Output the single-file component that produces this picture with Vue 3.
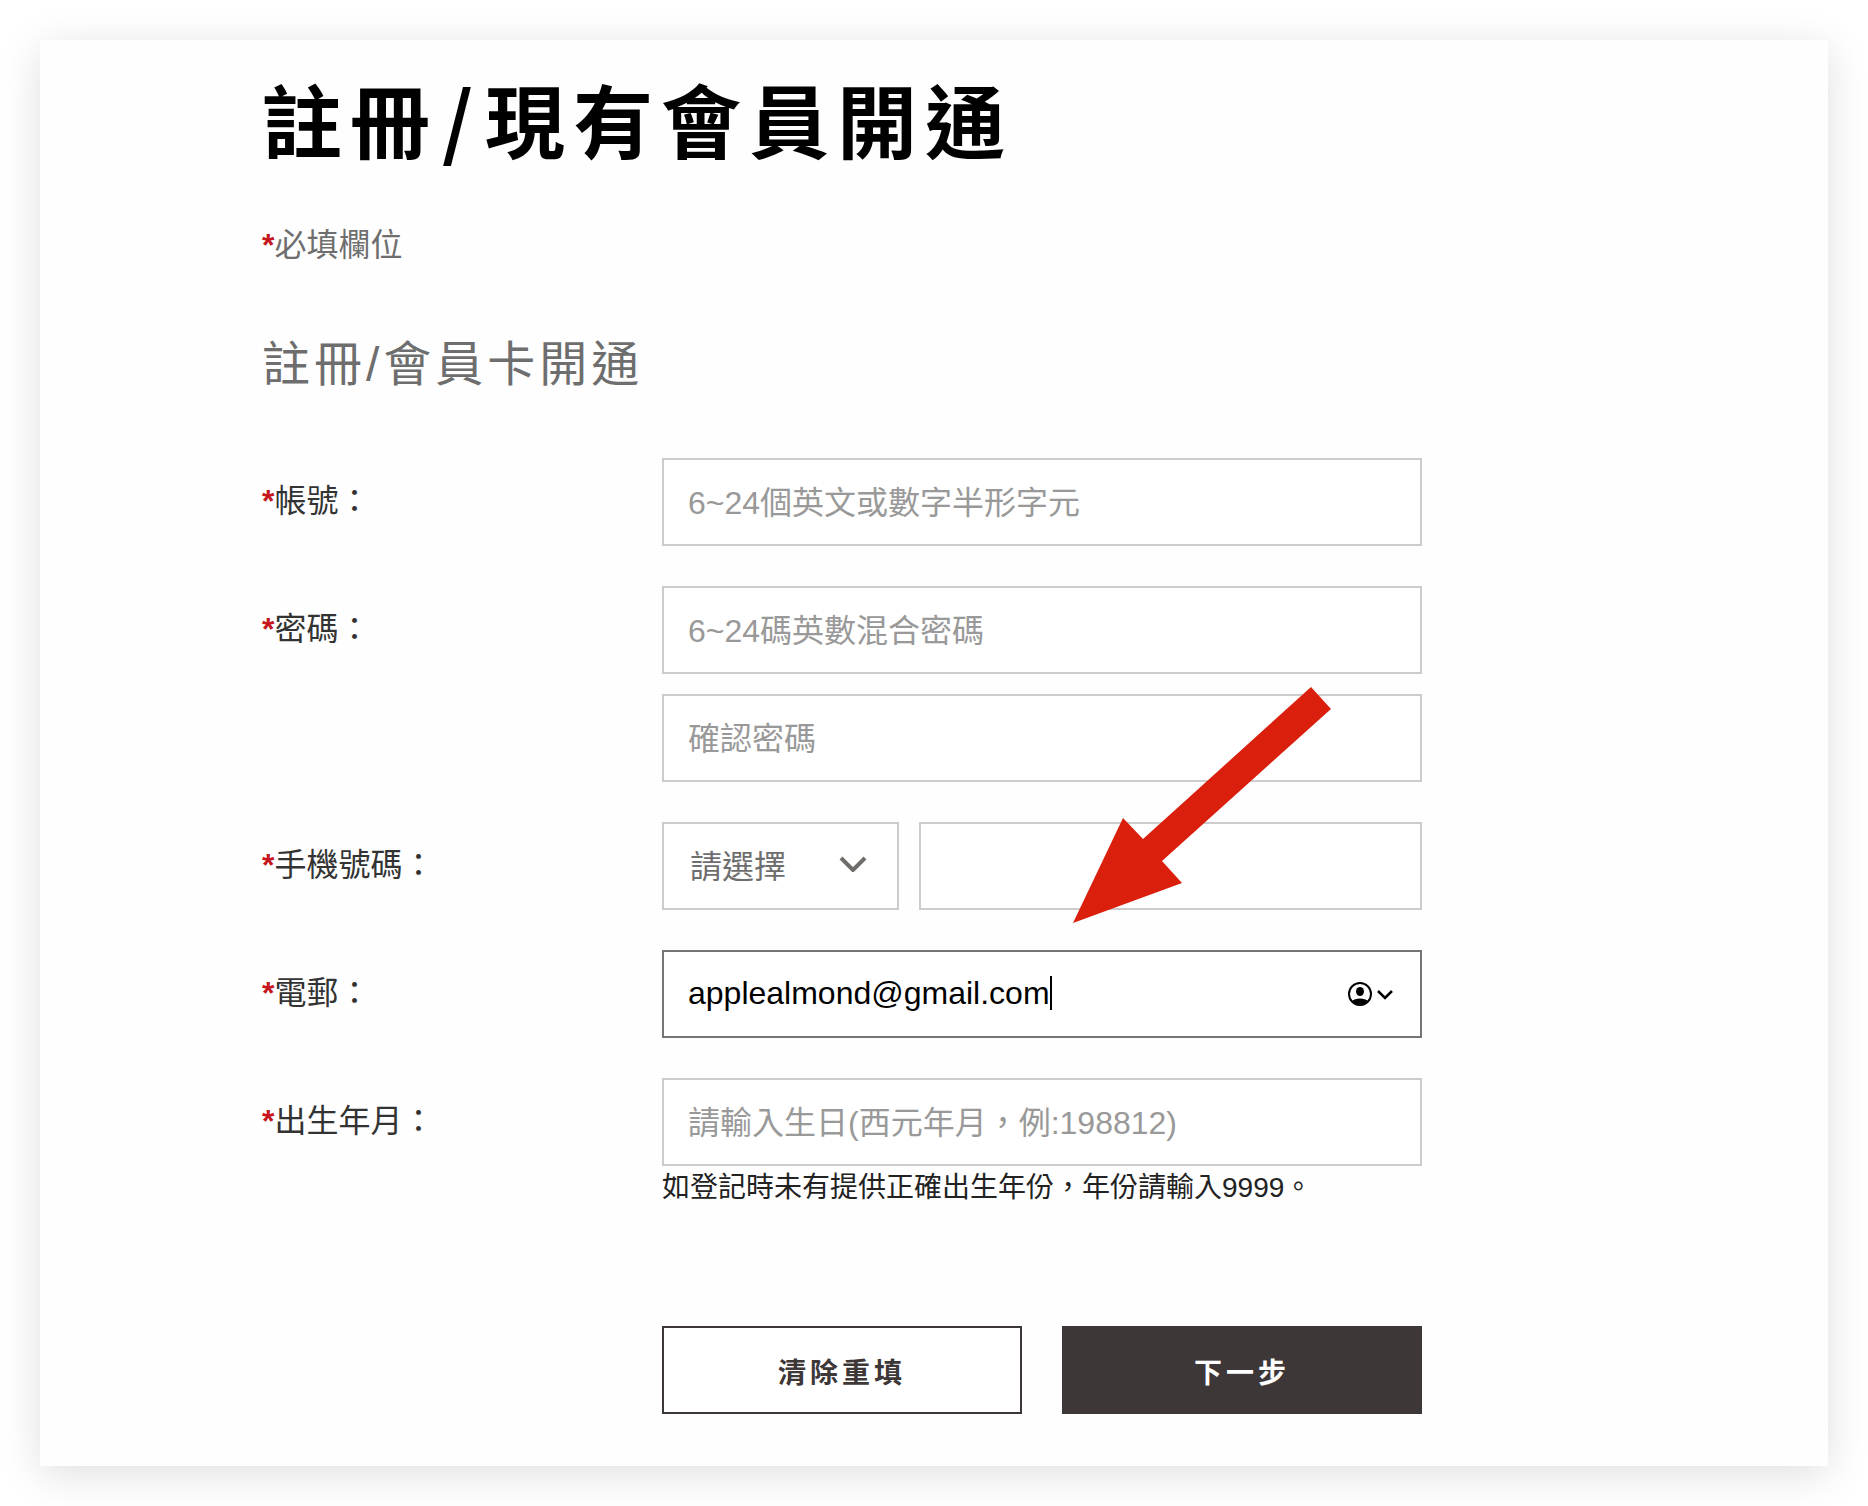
<script setup>
import { reactive } from 'vue'

const form = reactive({
  account: '',
  password: '',
  confirm: '',
  region: '',
  phone: '',
  email: 'applealmond@gmail.com',
  birth: '',
})

function clearForm() {
  Object.keys(form).forEach((key) => {
    form[key] = ''
  })
}
</script>

<template>
  <div class="page">
    <main class="card">
      <h1 class="title">註冊<span class="title-slash">/</span>現有會員開通</h1>
      <p class="required"><span class="star">*</span>必填欄位</p>
      <h2 class="subtitle">註冊/會員卡開通</h2>

      <form class="form" @submit.prevent>
        <div class="row">
          <label class="label" for="account"><span class="star">*</span>帳號：</label>
          <input id="account" v-model="form.account" class="control" type="text" placeholder="6~24個英文或數字半形字元" />
        </div>

        <div class="row">
          <label class="label" for="password"><span class="star">*</span>密碼：</label>
          <div class="stack">
            <input id="password" v-model="form.password" class="control" type="password" placeholder="6~24碼英數混合密碼" />
            <input id="confirm" v-model="form.confirm" class="control" type="password" aria-label="確認密碼" placeholder="確認密碼" />
          </div>
        </div>

        <div class="row">
          <label class="label" for="phone"><span class="star">*</span>手機號碼：</label>
          <div class="phone">
            <div class="select-wrap">
              <select id="region" v-model="form.region" class="control select" aria-label="請選擇">
                <option value="">請選擇</option>
              </select>
              <svg class="select-arrow" width="28" height="16" viewBox="0 0 28 16" aria-hidden="true">
                <path d="M2 2l12 12L26 2" fill="none" stroke="#706c69" stroke-width="4" />
              </svg>
            </div>
            <input id="phone" v-model="form.phone" class="control" type="tel" />
            <svg class="pointer" width="258" height="236" viewBox="0 0 258 236" aria-hidden="true">
              <path d="M0 236L50 131L70 152L238 0L258 22L89 174L109 196Z" fill="#da1f0d" />
            </svg>
          </div>
        </div>

        <div class="row">
          <label class="label" for="email"><span class="star">*</span>電郵：</label>
          <div class="email">
            <input id="email" v-model="form.email" class="control active" type="email" />
            <span class="caret"></span>
            <button class="autofill" type="button" aria-label="自動填入">
              <svg width="48" height="26" viewBox="0 0 48 26" aria-hidden="true">
                <circle cx="13" cy="13" r="11" fill="none" stroke="#000" stroke-width="2" />
                <ellipse cx="13" cy="10.5" rx="4" ry="4.5" />
                <path d="M5 20C8 16.500 18 16.500 21 20C17 26 9 26 5 20Z" />
                <path d="M31 10l7 7 7-7" fill="none" stroke="#000" stroke-width="2.500" />
              </svg>
            </button>
          </div>
        </div>

        <div class="row">
          <label class="label" for="birth"><span class="star">*</span>出生年月：</label>
          <div>
            <input id="birth" v-model="form.birth" class="control" type="text" placeholder="請輸入生日(西元年月，例:198812)" />
            <p class="hint">如登記時未有提供正確出生年份，年份請輸入9999。</p>
          </div>
        </div>

        <div class="actions">
          <button class="btn" type="button" @click="clearForm">清除重填</button>
          <button class="btn primary" type="submit">下一步</button>
        </div>
      </form>
    </main>
  </div>
</template>

<style>
body {
  margin: 0;
  background: #fff;
}
</style>

<style scoped>
.page {
  padding: 40px;
  font-family: "Liberation Sans", "Noto Sans CJK TC", sans-serif;
}

.card {
  box-sizing: border-box;
  padding: 25px 40px 52px 222px;
  background: #fefefe;
  box-shadow: 0 8px 40px rgba(0, 0, 0, 0.13);
}

.title {
  margin: 0;
  font-family: "Noto Sans CJK TC", sans-serif;
  font-size: 80px;
  line-height: 104px;
  font-weight: 700;
  letter-spacing: 8px;
  color: #000;
}

.title-slash {
  padding: 0 4px;
}

.required {
  margin: 52px 0 0;
  font-size: 32px;
  line-height: 48px;
  color: #6e6e6e;
}

.star {
  font-weight: 700;
  color: #c4161c;
}

.subtitle {
  margin: 60px 0 0;
  font-size: 48px;
  line-height: 72px;
  font-weight: 400;
  letter-spacing: 4px;
  color: #6e6e6e;
}

.form {
  display: flex;
  flex-direction: column;
  gap: 40px;
  margin-top: 57px;
}

.row {
  display: grid;
  grid-template-columns: 400px minmax(0, 760px);
  align-items: start;
}

.label {
  padding-top: 19px;
  font-size: 32px;
  line-height: 48px;
  color: #333;
}

.control {
  display: block;
  box-sizing: border-box;
  width: 100%;
  height: 88px;
  margin: 0;
  padding: 2px 24px 0;
  border: 2px solid #ccc;
  border-radius: 0;
  outline: none;
  background: #fff;
  font-family: inherit;
  font-size: 32px;
  color: #000;
}

.control::placeholder {
  color: #999;
  opacity: 1;
}

.control.active {
  padding: 0 24px 2px;
  border-color: #757575;
}

.stack {
  display: flex;
  flex-direction: column;
  gap: 20px;
}

.phone {
  position: relative;
  display: grid;
  grid-template-columns: 237px minmax(0, 1fr);
  gap: 20px;
}

.select-wrap {
  position: relative;
}

.control.select {
  padding-left: 26px;
  appearance: none;
  color: #6e6e6e;
}

.select-arrow {
  position: absolute;
  top: 34px;
  right: 32px;
  pointer-events: none;
}

.pointer {
  position: absolute;
  top: -135px;
  left: 411px;
  pointer-events: none;
}

.email {
  position: relative;
}

.caret {
  position: absolute;
  top: 26px;
  left: 388px;
  width: 2px;
  height: 34px;
  background: #000;
}

.autofill {
  position: absolute;
  top: 31px;
  right: 27px;
  display: flex;
  padding: 0;
  border: 0;
  background: none;
}

.hint {
  margin: 0;
  font-size: 28px;
  line-height: 44px;
  color: #222;
}

.actions {
  display: grid;
  grid-template-columns: repeat(2, minmax(0, 360px));
  gap: 40px;
  margin: 76px 0 0 400px;
}

.btn {
  height: 88px;
  padding: 2px 0 0;
  border: 2px solid #3e3737;
  background: #fff;
  font-family: inherit;
  font-size: 28px;
  font-weight: 700;
  letter-spacing: 4px;
  color: #3e3737;
}

.btn.primary {
  background: #3e3737;
  color: #fff;
}
</style>
